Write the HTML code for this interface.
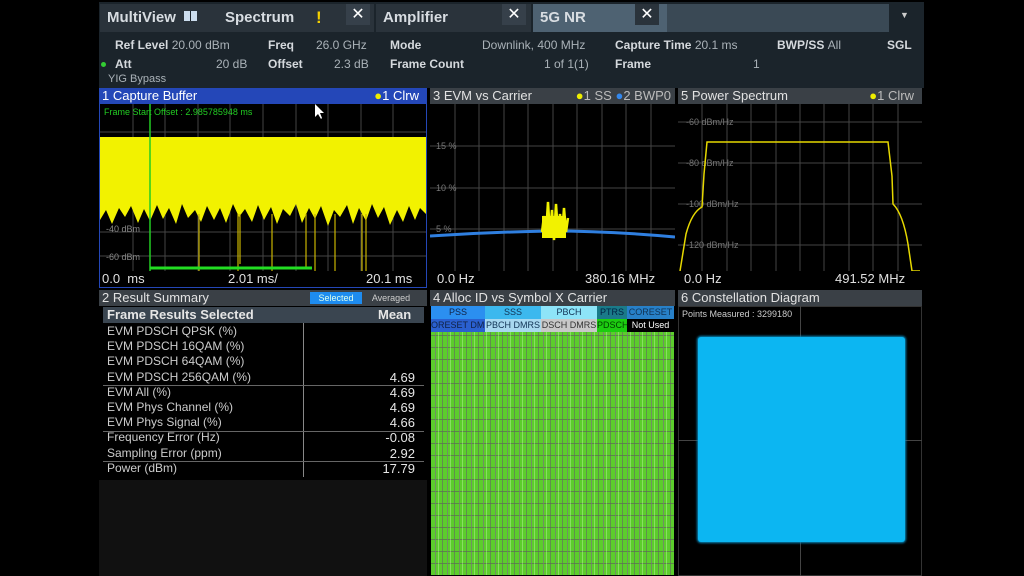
<!DOCTYPE html>
<html><head><meta charset="utf-8"><style>
*{margin:0;padding:0;box-sizing:border-box}
body{width:1024px;height:576px;background:#000;position:relative;overflow:hidden;font-family:"Liberation Sans","DejaVu Sans",sans-serif;color:#ddd}
.a{position:absolute}
.tab{position:absolute;top:4px;height:28px;background:#2a333b;color:#d8dde2;font-weight:bold;font-size:15px;line-height:28px;padding-left:7px}
.x{position:absolute;top:4px;width:24px;height:21px;background:#36404a;color:#fff;font-size:16px;text-align:center;line-height:21px;font-weight:bold}
.lbl{position:absolute;font-size:12px;color:#d5d9dd;font-weight:bold}
.val{position:absolute;font-size:12px;color:#aab2b8}
.title{position:absolute;height:16px;background:#3a4046;color:#e2e2e2;font-size:13px;line-height:16px;padding-left:3px}
.plot{position:absolute;background:#000}
.ax{position:absolute;font-size:13px;color:#e0e0e0}
.gl{position:absolute;font-size:9px;color:#777}
</style></head><body>
<!-- top bar -->
<div class="a" style="left:99px;top:2px;width:825px;height:32px;background:#1b242b"></div>
<div class="tab" style="left:100px;width:118px">MultiView <span style="display:inline-block;width:13px;height:10px;background:linear-gradient(90deg,#cde 45%,#1b242b 45%,#1b242b 55%,#cde 55%);margin-left:4px;vertical-align:1px"></span></div>
<div class="tab" style="left:218px;width:156px">Spectrum<span style="position:absolute;left:98px;color:#f4d000;font-size:17px">!</span></div>
<div class="x" style="left:346px">✕</div>
<div class="tab" style="left:376px;width:155px">Amplifier</div>
<div class="x" style="left:502px">✕</div>
<div class="tab" style="left:533px;width:134px;background:#4e6272">5G NR</div>
<div class="x" style="left:635px;background:#2a333b">✕</div>
<div class="a" style="left:667px;top:4px;width:222px;height:28px;background:#3a4955"></div>
<div class="a" style="left:900px;top:10px;color:#ccc;font-size:9px">▼</div>
<!-- info area -->
<div class="a" style="left:99px;top:34px;width:825px;height:54px;background:#1b242b"></div>
<div class="lbl" style="left:115px;top:38px">Ref Level <span style="font-weight:normal;color:#aab2b8">20.00 dBm</span></div>
<div class="lbl" style="left:268px;top:38px">Freq</div><div class="val" style="left:316px;top:38px">26.0 GHz</div>
<div class="lbl" style="left:390px;top:38px">Mode</div><div class="val" style="left:482px;top:38px">Downlink, 400 MHz</div>
<div class="lbl" style="left:615px;top:38px">Capture Time <span style="font-weight:normal;color:#aab2b8">20.1 ms</span></div>
<div class="lbl" style="left:777px;top:38px">BWP/SS <span style="font-weight:normal;color:#aab2b8">All</span></div>
<div class="lbl" style="left:887px;top:38px">SGL</div>
<div class="a" style="left:101px;top:62px;width:5px;height:5px;border-radius:50%;background:#3c3"></div>
<div class="lbl" style="left:115px;top:57px">Att</div><div class="val" style="left:216px;top:57px">20 dB</div>
<div class="lbl" style="left:268px;top:57px">Offset</div><div class="val" style="left:334px;top:57px">2.3 dB</div>
<div class="lbl" style="left:390px;top:57px">Frame Count</div><div class="val" style="left:544px;top:57px">1 of 1(1)</div>
<div class="lbl" style="left:615px;top:57px">Frame</div><div class="val" style="left:753px;top:57px">1</div>
<div class="val" style="left:108px;top:73px;font-size:11px">YIG Bypass</div>

<!-- Panel 1 capture buffer -->
<div class="a" style="left:99px;top:88px;width:328px;height:200px;border:1px solid #2447b8;background:#000"></div>
<div class="title" style="left:99px;top:88px;width:328px;background:#2447b8;color:#fff">1 Capture Buffer<span style="position:absolute;right:8px"><span style="color:#ee0">●</span>1 Clrw</span></div>
<svg class="a" style="left:100px;top:104px" width="326" height="167">
<g stroke="#444" stroke-width="1">
<line x1="0" y1="28" x2="326" y2="28"/><line x1="0" y1="62" x2="326" y2="62"/><line x1="0" y1="95" x2="326" y2="95"/><line x1="0" y1="128" x2="326" y2="128"/><line x1="0" y1="152" x2="326" y2="152"/>
<line x1="33" y1="0" x2="33" y2="167"/><line x1="65" y1="0" x2="65" y2="167"/><line x1="98" y1="0" x2="98" y2="167"/><line x1="130" y1="0" x2="130" y2="167"/><line x1="163" y1="0" x2="163" y2="167"/><line x1="196" y1="0" x2="196" y2="167"/><line x1="228" y1="0" x2="228" y2="167"/><line x1="261" y1="0" x2="261" y2="167"/><line x1="293" y1="0" x2="293" y2="167"/>
</g>
<polygon fill="#f2f200" points="0,33 326,33 326,110 320,104 315,116 309,102 303,118 297,106 290,121 284,103 278,114 272,100 266,117 259,104 253,120 247,101 240,113 234,106 228,122 221,102 215,115 209,104 202,119 196,100 190,112 183,105 177,120 171,103 164,116 158,101 152,118 145,105 139,113 133,100 126,119 120,104 114,116 107,102 101,118 95,106 88,114 82,100 76,120 69,104 63,115 57,101 50,117 44,105 38,119 31,102 25,113 19,104 12,120 6,106 0,116"/>
<g stroke="#c8b400" stroke-width="1.2"><line x1="99" y1="110" x2="99" y2="167"/><line x1="138" y1="110" x2="138" y2="167"/><line x1="140" y1="110" x2="140" y2="160"/><line x1="172" y1="110" x2="172" y2="167"/><line x1="206" y1="110" x2="206" y2="165"/><line x1="215" y1="110" x2="215" y2="167"/><line x1="235" y1="110" x2="235" y2="167"/><line x1="262" y1="110" x2="262" y2="167"/><line x1="266" y1="110" x2="266" y2="167"/></g>
<line x1="50" y1="0" x2="50" y2="167" stroke="#2c2" stroke-width="1.5"/>
<line x1="50" y1="164" x2="212" y2="164" stroke="#2d2" stroke-width="3"/>
<text x="4" y="11" font-size="9" fill="#2c2" font-family="Liberation Sans">Frame Start Offset : 2.985785948 ms</text>
<text x="6" y="128" font-size="9" fill="#888" font-family="Liberation Sans">-40 dBm</text>
<text x="6" y="156" font-size="9" fill="#888" font-family="Liberation Sans">-60 dBm</text>
<path d="M215 0 L215 13 L218 10 L221 15 L222 14 L220 9 L224 9 Z" fill="#fff"/>
</svg>
<div class="ax" style="left:102px;top:271px">0.0&nbsp; ms</div>
<div class="ax" style="left:228px;top:271px">2.01 ms/</div>
<div class="ax" style="left:366px;top:271px">20.1 ms</div>

<!-- Panel 3 EVM -->
<div class="title" style="left:430px;top:88px;width:245px">3 EVM vs Carrier<span style="position:absolute;right:4px;color:#bbb"><span style="color:#ee0">●</span>1 SS <span style="color:#38e">●</span>2 BWP0</span></div>
<svg class="a" style="left:430px;top:104px" width="245" height="167">
<g stroke="#444"><line x1="0" y1="42" x2="245" y2="42"/><line x1="0" y1="84" x2="245" y2="84"/><line x1="0" y1="125" x2="245" y2="125"/>
<line x1="25" y1="0" x2="25" y2="167"/><line x1="49" y1="0" x2="49" y2="167"/><line x1="74" y1="0" x2="74" y2="167"/><line x1="98" y1="0" x2="98" y2="167"/><line x1="123" y1="0" x2="123" y2="167"/><line x1="147" y1="0" x2="147" y2="167"/><line x1="172" y1="0" x2="172" y2="167"/><line x1="196" y1="0" x2="196" y2="167"/><line x1="221" y1="0" x2="221" y2="167"/></g>
<text x="6" y="45" font-size="9" fill="#777" font-family="Liberation Sans">15 %</text>
<text x="6" y="87" font-size="9" fill="#777" font-family="Liberation Sans">10 %</text>
<text x="6" y="128" font-size="9" fill="#777" font-family="Liberation Sans">5 %</text>
<path d="M0 132 Q60 128 120 127 Q180 127 245 133" stroke="#2f7fe0" stroke-width="3" fill="none"/>
<path d="M112 128 L114 112 L116 130 L118 98 L120 132 L122 106 L124 136 L126 100 L128 130 L130 110 L132 132 L134 104 L136 128 L138 114" stroke="#f2f200" stroke-width="2.5" fill="none"/>
<rect x="112" y="112" width="24" height="22" fill="#f2f200"/>
</svg>
<div class="ax" style="left:437px;top:271px">0.0 Hz</div>
<div class="ax" style="left:585px;top:271px">380.16 MHz</div>

<!-- Panel 5 Power spectrum -->
<div class="title" style="left:678px;top:88px;width:244px">5 Power Spectrum<span style="position:absolute;right:8px;color:#bbb"><span style="color:#ee0">●</span>1 Clrw</span></div>
<svg class="a" style="left:678px;top:104px" width="244" height="167">
<g stroke="#444"><line x1="0" y1="18" x2="244" y2="18"/><line x1="0" y1="59" x2="244" y2="59"/><line x1="0" y1="100" x2="244" y2="100"/><line x1="0" y1="141" x2="244" y2="141"/>
<line x1="24" y1="0" x2="24" y2="167"/><line x1="49" y1="0" x2="49" y2="167"/><line x1="73" y1="0" x2="73" y2="167"/><line x1="98" y1="0" x2="98" y2="167"/><line x1="122" y1="0" x2="122" y2="167"/><line x1="146" y1="0" x2="146" y2="167"/><line x1="171" y1="0" x2="171" y2="167"/><line x1="195" y1="0" x2="195" y2="167"/><line x1="220" y1="0" x2="220" y2="167"/></g>
<text x="8" y="21" font-size="9" fill="#777" font-family="Liberation Sans">-60 dBm/Hz</text>
<text x="8" y="62" font-size="9" fill="#777" font-family="Liberation Sans">-80 dBm/Hz</text>
<text x="8" y="103" font-size="9" fill="#777" font-family="Liberation Sans">-100 dBm/Hz</text>
<text x="8" y="144" font-size="9" fill="#777" font-family="Liberation Sans">-120 dBm/Hz</text>
<path d="M2 167 L8 130 Q14 108 24 103 L26 70 L29 38 L210 38 L214 72 L215 100 Q225 110 230 140 L234 167 L242 167" stroke="#e6d800" stroke-width="1.5" fill="none"/>
</svg>
<div class="ax" style="left:684px;top:271px">0.0 Hz</div>
<div class="ax" style="left:835px;top:271px">491.52 MHz</div>

<!-- Panel 2 Result summary -->
<div class="title" style="left:99px;top:290px;width:328px">2 Result Summary</div>
<div class="a" style="left:310px;top:292px;width:52px;height:12px;background:#1e8cf0;color:#dfe;font-size:9px;text-align:center;line-height:12px">Selected</div>
<div class="a" style="left:362px;top:292px;width:58px;height:12px;background:#3a4046;color:#ccc;font-size:9px;text-align:center;line-height:12px">Averaged</div>
<div class="a" style="left:103px;top:307px;width:321px;height:16px;background:#3a4550"></div>
<div class="a" style="left:107px;top:307px;font-size:13px;line-height:16px;color:#e6e6e6;font-weight:bold">Frame Results Selected</div>
<div class="a" style="left:378px;top:307px;font-size:13px;line-height:16px;color:#e6e6e6;font-weight:bold">Mean</div>
<div class="a" style="left:303px;top:323px;width:1px;height:154px;background:#888"></div>
<div class="a" style="left:103px;top:385px;width:321px;height:1px;background:#666"></div>
<div class="a" style="left:103px;top:431px;width:321px;height:1px;background:#666"></div>
<div class="a" style="left:103px;top:461px;width:321px;height:1px;background:#666"></div>
<div class="a" style="left:107px;top:324px;font-size:12px;line-height:15.2px;color:#ccc">EVM PDSCH QPSK (%)<br>EVM PDSCH 16QAM (%)<br>EVM PDSCH 64QAM (%)<br>EVM PDSCH 256QAM (%)<br>EVM All (%)<br>EVM Phys Channel (%)<br>EVM Phys Signal (%)<br>Frequency Error (Hz)<br>Sampling Error (ppm)<br>Power (dBm)</div>
<div class="a" style="left:360px;top:324px;width:55px;text-align:right;font-size:13px;line-height:15.2px;color:#e6e6e6"><br><br><br>4.69<br>4.69<br>4.69<br>4.66<br>-0.08<br>2.92<br>17.79</div>
<div class="a" style="left:99px;top:480px;width:328px;height:96px;background:#111"></div>

<!-- Panel 4 alloc -->
<div class="title" style="left:430px;top:290px;width:245px">4 Alloc ID vs Symbol X Carrier</div>
<div class="a" style="left:431px;top:306px;width:243px;height:26px;font-size:9px;text-align:center;line-height:13px">
<div class="a" style="left:0;top:0;width:54px;height:13px;background:#2b8ff0;color:#124">PSS</div>
<div class="a" style="left:54px;top:0;width:56px;height:13px;background:#3cb8ee;color:#135">SSS</div>
<div class="a" style="left:110px;top:0;width:56px;height:13px;background:#8ee4f8;color:#135">PBCH</div>
<div class="a" style="left:166px;top:0;width:30px;height:13px;background:#1a7a88;color:#024">PTRS</div>
<div class="a" style="left:196px;top:0;width:47px;height:13px;background:#2780c8;color:#135">CORESET</div>
<div class="a" style="left:0;top:13px;width:54px;height:13px;background:#2a60d0;color:#124;overflow:hidden;white-space:nowrap">ORESET DMRS</div>
<div class="a" style="left:54px;top:13px;width:56px;height:13px;background:#a8d8f0;color:#135">PBCH DMRS</div>
<div class="a" style="left:110px;top:13px;width:56px;height:13px;background:#c8c8c8;color:#333;overflow:hidden;white-space:nowrap">DSCH DMRS</div>
<div class="a" style="left:166px;top:13px;width:30px;height:13px;background:#1ccc10;color:#040">PDSCH</div>
<div class="a" style="left:196px;top:13px;width:47px;height:13px;background:#000;color:#fff">Not Used</div>
</div>
<div class="a" style="left:431px;top:332px;width:243px;height:243px;background-color:#5ccd2c;background-image:repeating-linear-gradient(90deg,transparent 0 4px,rgba(120,120,120,.7) 4px 5px,transparent 5px 7px,rgba(220,255,200,.35) 7px 8px,transparent 8px 11px,rgba(100,100,100,.6) 11px 12px),repeating-linear-gradient(0deg,transparent 0 11px,rgba(90,90,90,.6) 11px 12px)"></div>

<!-- Panel 6 constellation -->
<div class="title" style="left:678px;top:290px;width:244px">6 Constellation Diagram</div>
<div class="a" style="left:678px;top:306px;width:244px;height:270px;background:#000;border:1px solid #333"></div>
<div class="a" style="left:682px;top:309px;font-size:9px;color:#ccc">Points Measured : 3299180</div>
<div class="a" style="left:800px;top:306px;width:1px;height:270px;background:#444"></div>
<div class="a" style="left:678px;top:440px;width:244px;height:1px;background:#444"></div>
<div class="a" style="left:698px;top:337px;width:207px;height:205px;background:#0cb6f2;border-radius:3px;box-shadow:0 0 2px 1px #0a8cc0"></div>
</body></html>
